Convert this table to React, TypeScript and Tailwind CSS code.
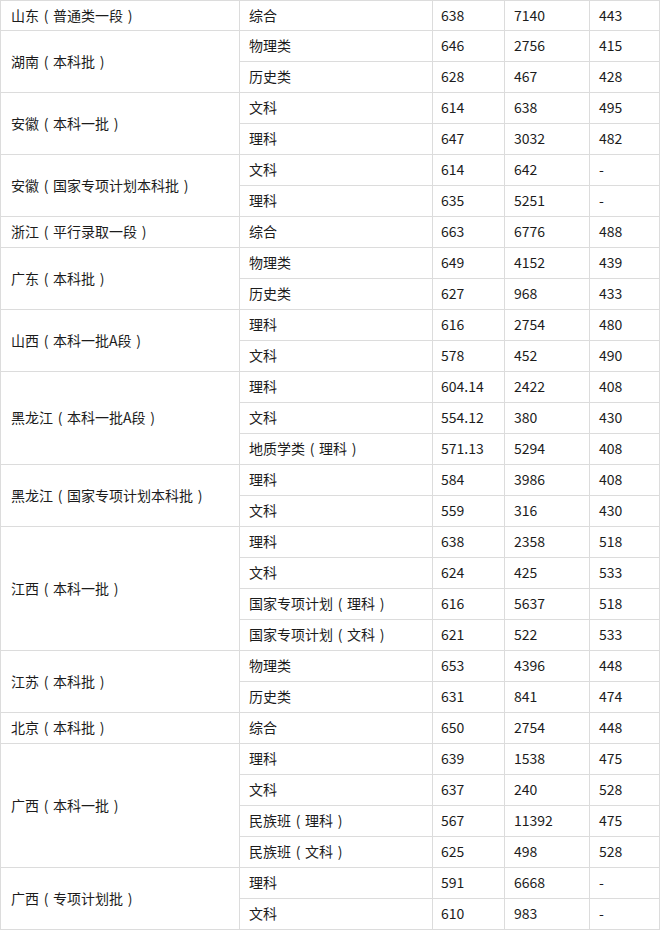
import React from "react";

type Sub = [string, string, string, string];
type Group = { name: string; rows: Sub[] };

const data: Group[] = [
  { name: "山东（普通类一段）", rows: [["综合", "638", "7140", "443"]] },
  { name: "湖南（本科批）", rows: [["物理类", "646", "2756", "415"], ["历史类", "628", "467", "428"]] },
  { name: "安徽（本科一批）", rows: [["文科", "614", "638", "495"], ["理科", "647", "3032", "482"]] },
  { name: "安徽（国家专项计划本科批）", rows: [["文科", "614", "642", "-"], ["理科", "635", "5251", "-"]] },
  { name: "浙江（平行录取一段）", rows: [["综合", "663", "6776", "488"]] },
  { name: "广东（本科批）", rows: [["物理类", "649", "4152", "439"], ["历史类", "627", "968", "433"]] },
  { name: "山西（本科一批A段）", rows: [["理科", "616", "2754", "480"], ["文科", "578", "452", "490"]] },
  {
    name: "黑龙江（本科一批A段）",
    rows: [
      ["理科", "604.14", "2422", "408"],
      ["文科", "554.12", "380", "430"],
      ["地质学类（理科）", "571.13", "5294", "408"],
    ],
  },
  { name: "黑龙江（国家专项计划本科批）", rows: [["理科", "584", "3986", "408"], ["文科", "559", "316", "430"]] },
  {
    name: "江西（本科一批）",
    rows: [
      ["理科", "638", "2358", "518"],
      ["文科", "624", "425", "533"],
      ["国家专项计划（理科）", "616", "5637", "518"],
      ["国家专项计划（文科）", "621", "522", "533"],
    ],
  },
  { name: "江苏（本科批）", rows: [["物理类", "653", "4396", "448"], ["历史类", "631", "841", "474"]] },
  { name: "北京（本科批）", rows: [["综合", "650", "2754", "448"]] },
  {
    name: "广西（本科一批）",
    rows: [
      ["理科", "639", "1538", "475"],
      ["文科", "637", "240", "528"],
      ["民族班（理科）", "567", "11392", "475"],
      ["民族班（文科）", "625", "498", "528"],
    ],
  },
  { name: "广西（专项计划批）", rows: [["理科", "591", "6668", "-"], ["文科", "610", "983", "-"]] },
];

const span: Record<number, string> = {
  1: "",
  2: "row-span-2",
  3: "row-span-3",
  4: "row-span-4",
};

function Txt({ s }: { s: string }) {
  const parts = s.split(/([（）])/);
  return (
    <span>
      {parts.map((p, i) =>
        p === "（" ? (
          <span key={i} className="inline-block w-[14px] text-center">(</span>
        ) : p === "）" ? (
          <span key={i} className="inline-block w-[14px] text-center">)</span>
        ) : (
          <React.Fragment key={i}>{p}</React.Fragment>
        )
      )}
    </span>
  );
}

const cell = "bg-white flex items-center pb-px text-[14px] text-[#1c1c1c] whitespace-nowrap";

export default function App() {
  return (
    <div className="bg-white w-[662px] h-[932px]" style={{ fontFamily: '"Noto Sans CJK SC", "Noto Sans", sans-serif' }}>
      <div className="grid grid-cols-[238px_192px_71px_84px_69px] grid-rows-[29px_repeat(29,30px)] gap-px p-px bg-[#dcdcdc] w-[660px]">
        {data.map((g, gi) => (
          <React.Fragment key={gi}>
            <div className={`${cell} ${span[g.rows.length]} pl-[10px]`}>
              <Txt s={g.name} />
            </div>
            {g.rows.map((r, ri) => (
              <React.Fragment key={ri}>
                <div className={`${cell} pl-[9px]`}>
                  <Txt s={r[0]} />
                </div>
                <div className={`${cell} pl-[8px]`}>{r[1]}</div>
                <div className={`${cell} pl-[9px]`}>{r[2]}</div>
                <div className={`${cell} pl-[9px]`}>{r[3]}</div>
              </React.Fragment>
            ))}
          </React.Fragment>
        ))}
      </div>
    </div>
  );
}
